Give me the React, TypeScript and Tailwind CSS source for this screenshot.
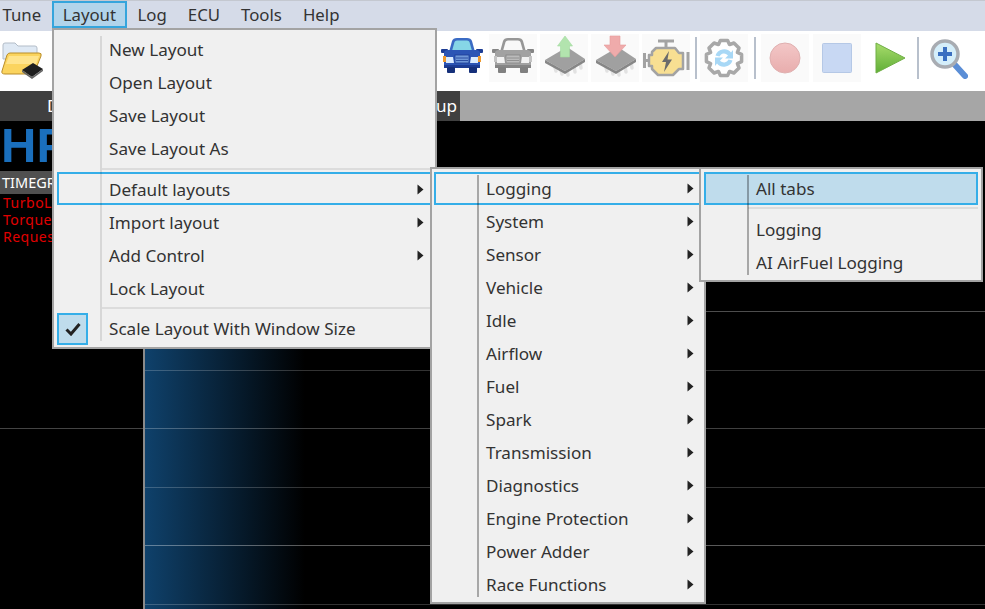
import React from 'react';

const FONT = "font-['Noto_Sans','Open_Sans',sans-serif]";

// 8 tooth gear outline for the sync icon
function gearPath(cx: number, cy: number, outer: number, inner: number) {
  const pts: string[] = [];
  for (let i = 0; i < 8; i++) {
    const a = (i * Math.PI) / 4;
    const t = [
      [-0.39, inner],
      [-0.2, outer],
      [0.2, outer],
      [0.39, inner],
    ];
    t.forEach(([d, r]) => {
      pts.push(`${(cx + r * Math.sin(a + d)).toFixed(1)} ${(cy - r * Math.cos(a + d)).toFixed(1)}`);
    });
  }
  return 'M' + pts.join('L') + 'Z';
}

function Tile({ children, dim = false }: { children: React.ReactNode; dim?: boolean }) {
  return (
    <div className={`w-[48px] h-[48px] shrink-0 blur-[0.5px] ${dim ? 'bg-[#fafafa]' : ''}`}>
      <svg viewBox="0 0 48 48" width="48" height="48">
        {children}
      </svg>
    </div>
  );
}

function ToolSep() {
  return <div className="w-[2px] h-[42px] shrink-0 bg-[#b8c0cc]" />;
}

function FolderIcon() {
  return (
    <svg viewBox="0 0 44 48" width="44" height="48" className="shrink-0 blur-[0.5px] translate-y-[1px]">
      <path d="M3 10 Q3 8 5 8 H15 L18 11 H35 Q37 11 37 13 V24 H3 Z" fill="#dfe9f4" stroke="#b3bdc8" />
      <path d="M10 18 H39 Q42 18 41 21 L35 36 Q34 39 31 39 H5 Q1 39 2 36 L7 20 Q8 18 10 18 Z" fill="#fbd45e" stroke="#b98d2a" />
      <path d="M9 21 H39 L36 29 H6 Z" fill="#ffe48c" />
      <path d="M22 35 L33 28 L43 34 L32 42 Z" fill="#1f1f1f" />
      <path d="M22 35 L32 42 L43 34 V36 L32 44 L22 37 Z" fill="#666" />
    </svg>
  );
}

function CarIcon({ gray = false }: { gray?: boolean }) {
  const body = gray ? '#a2a2a2' : '#2c55b5';
  const dark = gray ? '#858585' : '#1c3c94';
  const glass = gray ? '#f8f8f8' : '#86d6e6';
  const lamp = gray ? '#f2f2f2' : '#dcecff';
  const side = gray ? '#c4c4c4' : '#ef9a2e';
  return (
    <Tile dim={gray}>
      <g transform="translate(0 -2)">
        <path d="M11 20 L14 9 Q15 6 19 6 H29 Q33 6 34 9 L37 20 Z" fill={gray ? '#969696' : '#3a6bc4'} />
        <path d="M14 19 L16.500 10 Q17 8.500 19 8.500 H29 Q31 8.500 31.500 10 L34 19 Z" fill={glass} />
        <rect x="3" y="17" width="7" height="4" rx="1" fill={dark} />
        <rect x="38" y="17" width="7" height="4" rx="1" fill={dark} />
        <path d="M6 21 Q6 18 10 18 H38 Q42 18 42 21 V34 H6 Z" fill={body} />
        <rect x="5" y="24" width="3" height="6" fill={side} />
        <rect x="40" y="24" width="3" height="6" fill={side} />
        <path d="M8 25 H15 L16 31 H8 Z" fill={lamp} />
        <path d="M40 25 H33 L32 31 H40 Z" fill={lamp} />
        <rect x="17" y="23" width="14" height="8" fill={gray ? '#bbbbbb' : '#6f97d8'} stroke={dark} strokeWidth="0.800" />
        <path d="M18 26 H30 M18 28.500 H30" stroke={dark} strokeWidth="0.800" />
        <rect x="6" y="33" width="36" height="3" fill={dark} />
        <rect x="9" y="35" width="8" height="6" rx="1" fill={gray ? '#808080' : '#16307a'} />
        <rect x="31" y="35" width="8" height="6" rx="1" fill={gray ? '#808080' : '#16307a'} />
      </g>
    </Tile>
  );
}

function ChipIcon({ down = false }: { down?: boolean }) {
  return (
    <Tile dim>
      <path d="M14 30 L16 37 M20 33 L22 40 M27 35 L28 41 M34 32 L35 38 M40 28 L41 34" stroke="#e2e2e2" strokeWidth="3.500" strokeLinecap="round" />
      <path d="M5 26 L27 13 L45 25 L25 37 Z" fill="#a0a0a0" />
      <path d="M5 26 L25 37 L45 25 V28 L25 40 L5 29 Z" fill="#878787" />
      {down ? (
        <path d="M19 2 H29 V11 H35 L24 23 L13 11 H19 Z" fill="#efabab" stroke="#e59a9a" strokeWidth="0.600" />
      ) : (
        <path d="M25 2 L32.500 12 H29.500 V23 H20.500 V12 H17.500 Z" fill="#b2e4ae" stroke="#a3dc9f" strokeWidth="0.600" />
      )}
    </Tile>
  );
}

function EngineIcon() {
  return (
    <Tile dim>
      <path d="M16 7 H32 M24 7 V14" stroke="#a3a3a3" strokeWidth="3" />
      <path d="M14 14 H33 L37 19 H41 V35 H37 L31 41 H16 L10 35 V32 H7 V21 H10 V18 Z" fill="#f8df92" stroke="#a3a3a3" strokeWidth="2.500" strokeLinejoin="round" />
      <path d="M2.500 19 V34 M46 18 V36" stroke="#a3a3a3" strokeWidth="3" />
      <path d="M2.500 26.500 H8" stroke="#a3a3a3" strokeWidth="3" />
      <path d="M27 17 L20 28 H24 L22 38 L30 25.500 H25.500 Z" fill="#6b6b6b" />
    </Tile>
  );
}

function GearIcon() {
  return (
    <Tile dim>
      <path d={gearPath(24, 24, 18, 14.500)} fill="#fff" stroke="#a8a8a8" strokeWidth="3.500" strokeLinejoin="round" />
      <path d="M15.500 21.500 A9 9 0 0 1 31 18.500 L33 16 V24.500 H25 L28 21.500 A5 5 0 0 0 19.500 22.500 Z" fill="#a8d8f6" />
      <path d="M32.500 26.500 A9 9 0 0 1 17 29.500 L15 32 V23.500 H23 L20 26.500 A5 5 0 0 0 28.500 25.500 Z" fill="#a8d8f6" />
    </Tile>
  );
}

function RecordIcon() {
  return (
    <Tile dim>
      <defs>
        <linearGradient id="rec" x1="0" y1="0" x2="0" y2="1">
          <stop offset="0" stopColor="#f3c7c7" />
          <stop offset="1" stopColor="#e8adad" />
        </linearGradient>
      </defs>
      <circle cx="24" cy="24" r="15" fill="url(#rec)" stroke="#dfb0b0" />
    </Tile>
  );
}

function StopIcon() {
  return (
    <Tile dim>
      <rect x="9.500" y="9.500" width="29" height="29" rx="1" fill="#c8d8f3" stroke="#b5c8e6" />
    </Tile>
  );
}

function PlayIcon() {
  return (
    <Tile>
      <defs>
        <linearGradient id="play" x1="0" y1="0" x2="0" y2="1">
          <stop offset="0" stopColor="#a8dc6c" />
          <stop offset="1" stopColor="#5fae36" />
        </linearGradient>
      </defs>
      <path d="M10 9 L39 24 L10 39 Z" fill="url(#play)" stroke="#6fae45" strokeLinejoin="round" />
    </Tile>
  );
}

function ZoomIcon({ minus = false }: { minus?: boolean }) {
  return (
    <Tile>
      <path d="M30 31 L40 42" stroke="#5b8ed6" strokeWidth="6" strokeLinecap="round" />
      <circle cx="20" cy="20" r="13" fill="#d4eefa" stroke="#a8acb2" strokeWidth="3.500" />
      <path d="M13 20 H27" stroke="#3a6fc0" strokeWidth="4" />
      {!minus && <path d="M20 13 V27" stroke="#3a6fc0" strokeWidth="4" />}
    </Tile>
  );
}

function Arrow() {
  return (
    <svg width="7" height="11" viewBox="0 0 7 11" className="shrink-0 -mt-[1px]">
      <path d="M0.500 0.500 L6.500 5.500 L0.500 10.500 Z" fill="#222" />
    </svg>
  );
}

interface RowProps {
  label: string;
  arrow?: boolean;
  low?: boolean;
  state?: 'open' | 'active';
}

function MenuRow({ label, arrow = false, low = false, state }: RowProps) {
  const look =
    state === 'active'
      ? 'border-[#35aee8] bg-[#bfdcec]'
      : state === 'open'
        ? 'border-[#35aee8]'
        : 'border-transparent';
  return (
    <div className={`flex items-center justify-between h-[33px] border-2 pl-[50px] pr-[6px] ${low ? 'pt-[3px]' : 'pt-[1px]'} ${look}`}>
      <span>{label}</span>
      {arrow && <Arrow />}
    </div>
  );
}

function Gutter({ className }: { className: string }) {
  return <div className={`absolute w-[2px] z-10 ${className}`} />;
}

const menuBar = ['Tune', 'Layout', 'Log', 'ECU', 'Tools', 'Help'];

const layoutTop = ['New Layout', 'Open Layout', 'Save Layout', 'Save Layout As'];

const presets = [
  'System',
  'Sensor',
  'Vehicle',
  'Idle',
  'Airflow',
  'Fuel',
  'Spark',
  'Transmission',
  'Diagnostics',
  'Engine Protection',
  'Power Adder',
  'Race Functions',
];

const gridLines = [
  'h-[59px] border-white/30',
  'h-[59px] border-white/20',
  'h-[58px] border-white/25',
  'h-[59px] border-white/20',
  'h-[58px] border-white/35',
  'h-[59px] border-white/20',
];

export default function App() {
  return (
    <div className={`relative w-[985px] h-[609px] overflow-hidden bg-black flex flex-col text-[17.1px] leading-none text-[#333] ${FONT}`}>
      {/* menu bar */}
      <div className="flex h-[31px] shrink-0 border-t border-[#c4c8d0] bg-[#d5dbe8] -ml-[8px] text-[16.8px]">
        {menuBar.map((m) =>
          m === 'Layout' ? (
            <div key={m} className="flex items-center h-[27px] pl-[9px] pr-[9px] pt-[2px] border-2 border-[#35a5dc] bg-[#b2d4ea]">
              {m}
            </div>
          ) : (
            <div key={m} className="flex items-center h-[27px] px-[10.5px] pt-[2px]">
              {m}
            </div>
          )
        )}
      </div>

      {/* toolbar, the middle part sits under the open menu */}
      <div className="flex items-center h-[60px] shrink-0 bg-white pb-[6px]">
        <FolderIcon />
        <div className="w-[394px] shrink-0" />
        <CarIcon />
        <div className="w-[3px] shrink-0" />
        <CarIcon gray />
        <div className="w-[3px] shrink-0" />
        <ChipIcon />
        <div className="w-[3px] shrink-0" />
        <ChipIcon down />
        <div className="w-[3px] shrink-0" />
        <EngineIcon />
        <div className="w-[5px] shrink-0" />
        <ToolSep />
        <div className="w-[3px] shrink-0" />
        <GearIcon />
        <div className="w-[6px] shrink-0" />
        <ToolSep />
        <div className="w-[5px] shrink-0" />
        <RecordIcon />
        <div className="w-[4px] shrink-0" />
        <StopIcon />
        <div className="w-[5px] shrink-0" />
        <PlayIcon />
        <div className="w-[3px] shrink-0" />
        <ToolSep />
        <div className="w-[6px] shrink-0" />
        <ZoomIcon />
        <div className="w-[7px] shrink-0" />
        <ZoomIcon minus />
      </div>

      {/* tab strip */}
      <div className="flex h-[30px] shrink-0 bg-[#a6a6a6]">
        <div className="flex items-center justify-between w-[460px] bg-[#404040] pl-[47px] pr-[3px] text-white">
          <span>Dashboard</span>
          <span>Setup</span>
        </div>
      </div>

      {/* body */}
      <div className="flex flex-1 min-h-0">
        <div className="w-[145px] shrink-0 border-r-2 border-[#8a8a8a]">
          <div className="h-[50px] pl-[1px] pt-[2px] overflow-hidden font-['Liberation_Sans',sans-serif] font-bold text-[49px] leading-[44px] text-[#1a6fbd]">
            HP
          </div>
          <div className="flex items-center h-[23px] pl-[2px] bg-[#505050] text-white text-[14.5px]">TIMEGR</div>
          <div className="pl-[3px] text-[14px] leading-[17px] tracking-[0.5px] text-[#e00000]">
            <div>TurboL</div>
            <div>Torque</div>
            <div>Reques</div>
          </div>
          <div className="mt-[183px] border-b border-[#444]" />
        </div>
        <div className="flex-1 pt-[132px] bg-[linear-gradient(to_right,#0f416b,#000_160px)]">
          {gridLines.map((c) => (
            <div key={c} className={`border-b ${c}`} />
          ))}
        </div>
      </div>

      {/* Layout menu */}
      <div className="absolute left-[52px] top-[28px] w-[385px] h-[321px] border-2 border-[#a3a3a3] bg-[#f0f0f0] px-[3px] pt-[3px] z-20">
        <Gutter className="left-[46px] top-[6px] h-[305px] bg-black/10" />
        {layoutTop.map((l) => (
          <MenuRow key={l} label={l} />
        ))}
        <div className="ml-[45px] mt-[3px] mb-[2px] h-[2px] bg-[#dcdcdc]" />
        <MenuRow label="Default layouts" arrow low state="open" />
        <MenuRow label="Import layout" arrow low />
        <MenuRow label="Add Control" arrow low />
        <MenuRow label="Lock Layout" low />
        <div className="ml-[45px] mt-[3px] mb-[3px] h-[2px] bg-[#dcdcdc]" />
        <div className="flex items-center h-[33px]">
          <span className="flex items-center justify-center w-[31px] h-[32px] border-2 border-[#35aee8] bg-[#bfdcec]">
            <svg width="16" height="14" viewBox="0 0 16 14">
              <path d="M1.500 7.500 L6 12 L14.500 2" fill="none" stroke="#222" strokeWidth="3" />
            </svg>
          </span>
          <span className="ml-[21px] pt-[1px]">Scale Layout With Window Size</span>
        </div>
      </div>

      {/* Default layouts submenu */}
      <div className="absolute left-[430px] top-[167px] w-[276px] h-[437px] border-2 border-[#a3a3a3] bg-[#f0f0f0] px-[2px] pt-[3px] z-30">
        <Gutter className="left-[45px] top-[6px] h-[422px] bg-black/30" />
        <MenuRow label="Logging" arrow state="open" />
        {presets.map((p) => (
          <MenuRow key={p} label={p} arrow />
        ))}
      </div>

      {/* Logging submenu */}
      <div className="absolute left-[699px] top-[167px] w-[284px] h-[115px] border-2 border-[#a3a3a3] bg-[#f0f0f0] px-[3px] pt-[3px] z-40">
        <Gutter className="left-[46px] top-[6px] h-[100px] bg-black/30" />
        <MenuRow label="All tabs" state="active" />
        <div className="ml-[44px] mt-[2px] mb-[4px] h-[2px] bg-[#dcdcdc]" />
        <MenuRow label="Logging" />
        <MenuRow label="AI AirFuel Logging" />
      </div>
    </div>
  );
}
